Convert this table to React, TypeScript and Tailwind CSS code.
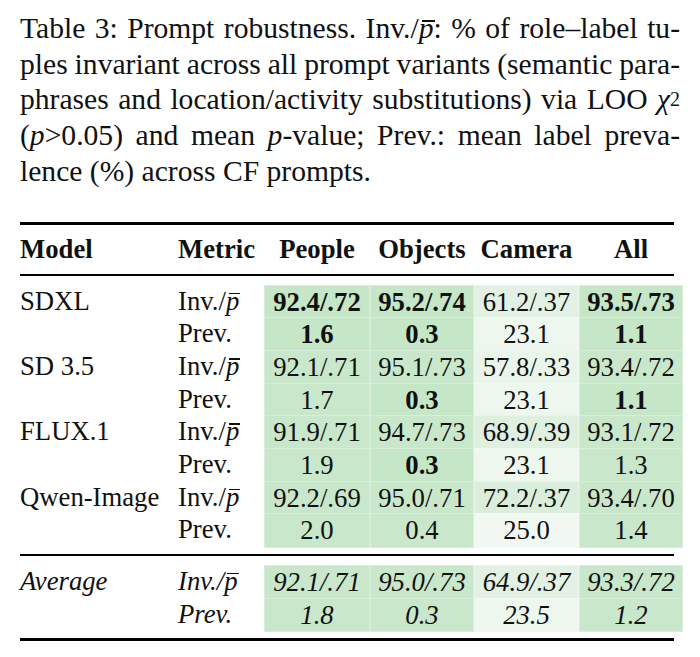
import React from 'react';

type Cell = { v: string; bg: string; b?: boolean };
type Row = { model?: string; metric: 'inv' | 'prev'; cells: Cell[] };

const G1 = '#c6e6c8';
const G2 = '#c9e7cb';

const rows: Row[] = [
  { model: 'SDXL', metric: 'inv', cells: [
    { v: '92.4/.72', bg: G1, b: true }, { v: '95.2/.74', bg: G1, b: true }, { v: '61.2/.37', bg: '#e2f1e3' }, { v: '93.5/.73', bg: G1, b: true },
  ] },
  { metric: 'prev', cells: [
    { v: '1.6', bg: G1, b: true }, { v: '0.3', bg: G1, b: true }, { v: '23.1', bg: '#edf7ee' }, { v: '1.1', bg: G1, b: true },
  ] },
  { model: 'SD 3.5', metric: 'inv', cells: [
    { v: '92.1/.71', bg: G2 }, { v: '95.1/.73', bg: G2 }, { v: '57.8/.33', bg: '#e9f5ea' }, { v: '93.4/.72', bg: G2 },
  ] },
  { metric: 'prev', cells: [
    { v: '1.7', bg: G2 }, { v: '0.3', bg: G1, b: true }, { v: '23.1', bg: '#edf7ee' }, { v: '1.1', bg: G1, b: true },
  ] },
  { model: 'FLUX.1', metric: 'inv', cells: [
    { v: '91.9/.71', bg: G2 }, { v: '94.7/.73', bg: G2 }, { v: '68.9/.39', bg: '#dfefe0' }, { v: '93.1/.72', bg: G2 },
  ] },
  { metric: 'prev', cells: [
    { v: '1.9', bg: G2 }, { v: '0.3', bg: G1, b: true }, { v: '23.1', bg: '#edf7ee' }, { v: '1.3', bg: G2 },
  ] },
  { model: 'Qwen-Image', metric: 'inv', cells: [
    { v: '92.2/.69', bg: G2 }, { v: '95.0/.71', bg: G2 }, { v: '72.2/.37', bg: '#daeedb' }, { v: '93.4/.70', bg: G2 },
  ] },
  { metric: 'prev', cells: [
    { v: '2.0', bg: G2 }, { v: '0.4', bg: G2 }, { v: '25.0', bg: '#f1f8f1' }, { v: '1.4', bg: G2 },
  ] },
];

const avgRows: Row[] = [
  { model: 'Average', metric: 'inv', cells: [
    { v: '92.1/.71', bg: G2 }, { v: '95.0/.73', bg: G2 }, { v: '64.9/.37', bg: '#e2f1e3' }, { v: '93.3/.72', bg: G2 },
  ] },
  { metric: 'prev', cells: [
    { v: '1.8', bg: G2 }, { v: '0.3', bg: G2 }, { v: '23.5', bg: '#edf7ee' }, { v: '1.2', bg: G2 },
  ] },
];

// p with a bar, as in \bar{p}
const PBar = ({ top = 'top-[7px]' }: { top?: string }) => (
  <span className="relative italic">
    p
    <span className={`absolute left-[3px] right-[-1px] ${top} h-[1.5px] bg-[#111]`} />
  </span>
);

const Metric = ({ kind }: { kind: 'inv' | 'prev' }) =>
  kind === 'inv' ? (
    <span>
      Inv./<PBar />
    </span>
  ) : (
    <span>Prev.</span>
  );

const cols = 'grid grid-cols-[158px_86px_106px_104px_105px_104px]';

const TableRows = ({ data, italic }: { data: Row[]; italic?: boolean }) => (
  <div className={italic ? 'italic' : ''}>
    {data.map((r, i) => (
      <div key={i} className={`${cols} h-[32.67px] leading-[32.67px]`}>
        <div>{r.model}</div>
        <div>
          <Metric kind={r.metric} />
        </div>
        {r.cells.map((c, j) => (
          <div
            key={j}
            className={`text-center border border-white/30 ${c.b ? 'font-bold' : ''}`}
            style={{ backgroundColor: c.bg }}
          >
            {c.v}
          </div>
        ))}
      </div>
    ))}
  </div>
);

const Line = ({ children, last }: { children: React.ReactNode; last?: boolean }) => (
  <div
    className={
      last
        ? 'text-left whitespace-nowrap'
        : 'text-justify [text-align-last:justify] whitespace-nowrap [word-spacing:-3px]'
    }
  >
    {children}
  </div>
);

export default function App() {
  return (
    <div className="w-[700px] h-[657px] bg-white text-[#111] font-['Liberation_Serif',serif] overflow-hidden">
      <div className="pl-[20px] pt-[11px] w-[680px] text-[29.6px] leading-[35.7px]">
        <Line>
          Table 3: Prompt robustness. Inv./<PBar top="top-[8px]" />: % of role–label tu-
        </Line>
        <Line>ples invariant across all prompt variants (semantic para-</Line>
        <Line>
          phrases and location/activity substitutions) via LOO{' '}
          <span className="italic">χ</span>
          <sup className="text-[20px] relative top-[-3px]">2</sup>
        </Line>
        <Line>
          (<span className="italic">p</span>&gt;0.05) and mean <span className="italic">p</span>-value; Prev.: mean label preva-
        </Line>
        <Line last>lence (%) across CF prompts.</Line>
      </div>

      <div className="pl-[20px] mt-[32.5px] text-[26.7px]">
        <div className="w-[654px] h-[3px] bg-black" />
        <div className={`${cols} font-bold pt-[8px] pb-[8px] leading-[32.67px]`}>
          <div>Model</div>
          <div>Metric</div>
          <div className="text-center">People</div>
          <div className="text-center">Objects</div>
          <div className="text-center">Camera</div>
          <div className="text-center">All</div>
        </div>
        <div className="w-[654px] h-[2px] bg-black" />
        <div className="pt-[9px] pb-[8px]">
          <TableRows data={rows} />
        </div>
        <div className="w-[654px] h-[2px] bg-black" />
        <div className="pt-[9px] pb-[8px]">
          <TableRows data={avgRows} italic />
        </div>
        <div className="w-[654px] h-[3px] bg-black" />
      </div>
    </div>
  );
}
